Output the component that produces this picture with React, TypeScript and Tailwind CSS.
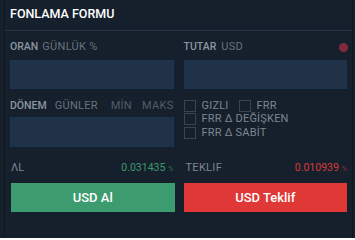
import React from "react";

function Box() {
  return <span className="inline-block w-[12px] h-[12px] border border-[#38444f] shrink-0" />;
}

export default function App() {
  return (
    <div
      className="w-[355px] h-[238px] bg-[#15202b] overflow-hidden"
      style={{ fontFamily: "Roboto, 'Liberation Sans', sans-serif" }}
    >
      <div className="ml-[4px] w-[349px] h-full border-x border-[#0f1822] bg-[#15202c]">
        <div className="h-[31px] border-b border-[#243341] pl-[5px] flex items-center pb-[1px]">
          <span className="text-[12.5px] font-medium text-white leading-none">
            FONLAMA FORMU
          </span>
        </div>
        <div className="px-[5px]">
          <div className="grid grid-cols-2 gap-x-[10px]">
            <div>
              <div className="pt-[10px] h-[22px] flex items-center leading-[12px] gap-[4px]">
                <span className="text-[10.5px] text-[#8c959f] font-medium">ORAN</span>
                <span className="text-[11px] tracking-[0.3px] text-[#67727d]">GÜNLÜK %</span>
              </div>
              <div className="mt-[7px] h-[29px] bg-[#203247] border border-[#1b3453]" />
            </div>
            <div>
              <div className="pt-[10px] h-[22px] flex items-center justify-between leading-[12px]">
                <div className="flex gap-[5px] items-center">
                  <span className="text-[10.5px] text-[#8c959f] font-medium">TUTAR</span>
                  <span className="text-[11px] tracking-[0.3px] text-[#67727d]">USD</span>
                </div>
                <span className="w-[9px] h-[9px] rounded-full bg-[#82293a] mr-[-0.5px]" />
              </div>
              <div className="mt-[7px] h-[29px] bg-[#203247] border border-[#1b3453]" />
            </div>
          </div>

          <div className="grid grid-cols-2 gap-x-[10px] mt-[10px]">
            <div>
              <div className="h-[14px] flex items-center leading-[12px]">
                <span className="text-[10.5px] text-[#8c959f] font-medium">DÖNEM</span>
                <span className="text-[11px] tracking-[0.3px] text-[#67727d] ml-[8px]">GÜNLER</span>
                <span className="text-[11px] tracking-[0.3px] text-[#515c67] ml-auto">MİN</span>
                <span className="text-[11px] tracking-[0.3px] text-[#515c67] ml-[10px]">MAKS</span>
              </div>
              <div className="mt-[4px] h-[30px] bg-[#203247] border border-[#1b3453]" />
            </div>
            <div className="flex flex-col text-[11px] tracking-[0.2px] leading-[12px] text-[#7c8690]">
              <div className="h-[13.5px] flex items-center">
                <Box />
                <span className="ml-[6px]">GIZLI</span>
                <span className="ml-[10px] flex"><Box /></span>
                <span className="ml-[6px]">FRR</span>
              </div>
              <div className="h-[13.5px] flex items-center">
                <Box />
                <span className="ml-[6px]">FRR ∆ DEĞİŞKEN</span>
              </div>
              <div className="h-[13.5px] flex items-center">
                <Box />
                <span className="ml-[6px]">FRR ∆ SABİT</span>
              </div>
            </div>
          </div>

          <div className="grid grid-cols-2 gap-x-[10px] mt-[15px]">
            <div>
              <div className="h-[12px] flex items-center justify-between leading-[12px]">
                <span className="text-[11px] text-[#7c8690] ml-[1px]">ΛL</span>
                <span className="text-[10.5px] text-[#3d9a6e]">
                  0.031435<span className="text-[7px] text-[#2f6f55] ml-[3px]">%</span>
                </span>
              </div>
              <button className="mt-[9px] w-full h-[29px] bg-[#3d9b70] text-white text-[13px] font-medium flex items-center justify-center ml-[1px]">
                USD Al
              </button>
            </div>
            <div>
              <div className="h-[12px] flex items-center justify-between leading-[12px]">
                <span className="text-[11px] tracking-[0.3px] text-[#7c8690] ml-[2px]">TEKLIF</span>
                <span className="text-[10.5px] text-[#d83a3a]">
                  0.010939<span className="text-[7px] text-[#8a3035] ml-[3px]">%</span>
                </span>
              </div>
              <button className="mt-[9px] w-full h-[29px] bg-[#e03737] text-white text-[13px] font-medium flex items-center justify-center">
                USD Teklif
              </button>
            </div>
          </div>
        </div>
      </div>
    </div>
  );
}
